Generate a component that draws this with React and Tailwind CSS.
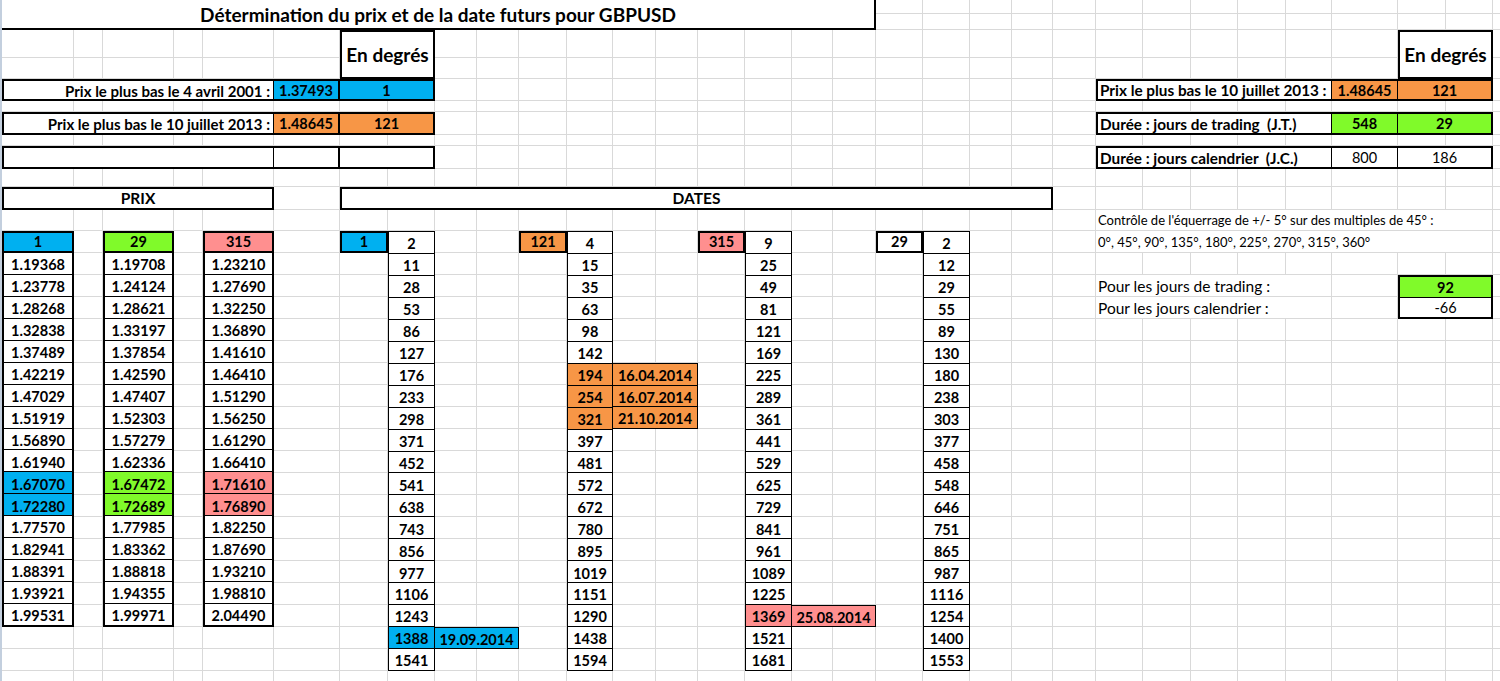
import React from "react";
import clsx from "clsx";

// feuille GBPUSD : colonnes et lignes au pixel près de la capture Excel
const BLUE = "bg-[#00b0f0]";
const ORANGE = "bg-[#f79646]";
const GREEN = "bg-[#80fa2a]";
const PINK = "bg-[#ff8f8f]";

const prixColumns = [
  {
    head: "1",
    pos: "col-start-1",
    body: "col-start-1 row-start-14 row-span-17",
    fill: BLUE,
    values: ["1.19368", "1.23778", "1.28268", "1.32838", "1.37489", "1.42219", "1.47029", "1.51919", "1.56890", "1.61940", "1.67070", "1.72280", "1.77570", "1.82941", "1.88391", "1.93921", "1.99531"],
  },
  {
    head: "29",
    pos: "col-start-3",
    body: "col-start-3 row-start-14 row-span-17",
    fill: GREEN,
    values: ["1.19708", "1.24124", "1.28621", "1.33197", "1.37854", "1.42590", "1.47407", "1.52303", "1.57279", "1.62336", "1.67472", "1.72689", "1.77985", "1.83362", "1.88818", "1.94355", "1.99971"],
  },
  {
    head: "315",
    pos: "col-start-5",
    body: "col-start-5 row-start-14 row-span-17",
    fill: PINK,
    values: ["1.23210", "1.27690", "1.32250", "1.36890", "1.41610", "1.46410", "1.51290", "1.56250", "1.61290", "1.66410", "1.71610", "1.76890", "1.82250", "1.87690", "1.93210", "1.98810", "2.04490"],
  },
];

// colonnes de dates : la 1re valeur est l'en-tête à côté de la case en degrés
const dateColumns = [
  {
    deg: "1",
    degPos: "col-start-7 row-start-13",
    degFill: BLUE,
    body: "col-start-8 row-start-13 row-span-20",
    values: ["2", "11", "28", "53", "86", "127", "176", "233", "298", "371", "452", "541", "638", "743", "856", "977", "1106", "1243", "1388", "1541"],
    marks: { 18: BLUE },
  },
  {
    deg: "121",
    degPos: "col-start-11 row-start-13",
    degFill: ORANGE,
    body: "col-start-12 row-start-13 row-span-20",
    values: ["4", "15", "35", "63", "98", "142", "194", "254", "321", "397", "481", "572", "672", "780", "895", "1019", "1151", "1290", "1438", "1594"],
    marks: { 6: ORANGE, 7: ORANGE, 8: ORANGE },
  },
  {
    deg: "315",
    degPos: "col-start-15 row-start-13",
    degFill: PINK,
    body: "col-start-16 row-start-13 row-span-20",
    values: ["9", "25", "49", "81", "121", "169", "225", "289", "361", "441", "529", "625", "729", "841", "961", "1089", "1225", "1369", "1521", "1681"],
    marks: { 17: PINK },
  },
  {
    deg: "29",
    degPos: "col-start-19 row-start-13",
    degFill: "bg-white",
    body: "col-start-20 row-start-13 row-span-20",
    values: ["2", "12", "29", "55", "89", "130", "180", "238", "303", "377", "458", "548", "646", "751", "865", "987", "1116", "1254", "1400", "1553"],
    marks: {},
  },
];

const leftRows = [
  { pos: "col-start-1 col-span-8 row-start-5", label: "Prix le plus bas le 4 avril 2001 :", value: "1.37493", deg: "1", fill: BLUE },
  { pos: "col-start-1 col-span-8 row-start-7", label: "Prix le plus bas le 10 juillet 2013 :", value: "1.48645", deg: "121", fill: ORANGE },
  { pos: "col-start-1 col-span-8 row-start-9", label: "", value: "", deg: "", fill: "bg-white" },
];

const rightRows = [
  { pos: "col-start-24 col-span-8 row-start-5", label: "Prix le plus bas le 10 juillet 2013 :", value: "1.48645", deg: "121", fill: ORANGE, bold: true },
  { pos: "col-start-24 col-span-8 row-start-7", label: "Durée : jours de trading  (J.T.)", value: "548", deg: "29", fill: GREEN, bold: true },
  { pos: "col-start-24 col-span-8 row-start-9", label: "Durée : jours calendrier  (J.C.)", value: "800", deg: "186", fill: "bg-white", bold: false },
];

const FILLERS = Array.from({ length: 32 * 34 });

function App() {
  return (
    <div className="flex h-[681px] w-[1500px] overflow-hidden bg-white text-[15px] leading-none text-black font-['Lato','Liberation_Sans',sans-serif]">
      <div className="w-[2px] shrink-0 bg-[#c3cfde]" />

      <div className="grid shrink-0 grid-cols-[72px_29px_71px_29px_71px_66px_48px_47px_42px_42px_48px_46px_43px_42px_47px_47px_41px_43px_47px_47px_42px_41px_43px_47px_48px_47px_48px_46px_66px_48px_47px_47px] grid-rows-[14px_16px_28px_21px_22px_11px_23px_11px_23px_18px_23px_21px_repeat(21,22px)] auto-rows-[22px]">
        {/* titre */}
        <div className="col-start-1 col-span-18 row-start-1 row-span-2 flex items-center justify-center border-r-2 border-b-2 border-black bg-white text-[19px] font-bold">
          Détermination du prix et de la date futurs pour GBPUSD
        </div>

        {/* en degrés */}
        <div className="col-start-7 col-span-2 row-start-3 row-span-2 flex items-center justify-center border-2 border-black bg-white text-[19px] font-bold">
          En degrés
        </div>
        <div className="col-start-30 col-span-2 row-start-3 row-span-2 flex items-center justify-center border-2 border-black bg-white text-[19px] font-bold">
          En degrés
        </div>

        {leftRows.map((r) => (
          <div key={r.pos} className={clsx(r.pos, "flex border-2 border-black bg-white font-bold")}>
            <div className="flex w-[270px] items-center justify-end border-r border-black pt-[2px] pr-[3px]">{r.label}</div>
            <div className={clsx("flex w-[66px] items-center justify-center border-r-2 border-black pt-[2px] text-[14.5px]", r.fill)}>{r.value}</div>
            <div className={clsx("flex flex-1 items-center justify-center pt-[2px] text-[14.5px]", r.fill)}>{r.deg}</div>
          </div>
        ))}

        {rightRows.map((r) => (
          <div key={r.pos} className={clsx(r.pos, "flex border-2 border-black bg-white")}>
            <div className="flex w-[234px] items-center border-r border-black pt-[2px] pl-[2px] text-[15.3px] font-bold whitespace-pre">{r.label}</div>
            <div className={clsx("flex w-[66px] items-center justify-center border-r border-black pt-[2px] text-[14.5px]", r.fill, r.bold && "font-bold")}>{r.value}</div>
            <div className={clsx("flex flex-1 items-center justify-center pt-[2px] text-[14.5px]", r.fill, r.bold && "font-bold")}>{r.deg}</div>
          </div>
        ))}

        {/* PRIX / DATES */}
        <div className="col-start-1 col-span-5 row-start-11 flex items-center justify-center border-2 border-black bg-white text-[15.5px] font-bold">PRIX</div>
        <div className="col-start-7 col-span-16 row-start-11 flex items-center justify-center border-2 border-black bg-white text-[15.5px] font-bold">DATES</div>

        {prixColumns.map((c) => (
          <React.Fragment key={c.head}>
            <div className={clsx(c.pos, "row-start-13 flex items-center justify-center border-2 border-black pt-[1px] text-[14.5px] font-bold", c.fill)}>{c.head}</div>
            <div className={clsx(c.body, "flex flex-col border-x-2 border-b-2 border-black bg-white text-[14.5px] font-bold")}>
              {c.values.map((v, i) => (
                <div
                  key={v}
                  className={clsx("flex flex-1 items-center justify-center border-b border-black pt-[4px] last:border-b-0", (i === 10 || i === 11) && c.fill)}
                >
                  {v}
                </div>
              ))}
            </div>
          </React.Fragment>
        ))}

        {dateColumns.map((c) => (
          <React.Fragment key={c.body}>
            <div className={clsx(c.degPos, "flex items-center justify-center border-2 border-black pt-[1px] text-[14.5px] font-bold", c.degFill)}>{c.deg}</div>
            <div className={clsx(c.body, "flex flex-col border border-black bg-white text-[14.5px] font-bold")}>
              {c.values.map((v, i) => (
                <div key={i} className={clsx("flex flex-1 items-center justify-center border-b border-black pt-[4px] last:border-b-0", c.marks[i])}>
                  {v}
                </div>
              ))}
            </div>
          </React.Fragment>
        ))}

        {/* dates calculées */}
        <div className="col-start-13 col-span-2 row-start-19 row-span-3 flex flex-col border-y border-r border-black bg-[#f79646] text-[14.5px] font-bold">
          <div className="flex flex-1 items-center justify-center border-b border-black pt-[4px]">16.04.2014</div>
          <div className="flex flex-1 items-center justify-center border-b border-black pt-[4px]">16.07.2014</div>
          <div className="flex flex-1 items-center justify-center pt-[4px]">21.10.2014</div>
        </div>
        <div className="col-start-17 col-span-2 row-start-30 flex items-center justify-center border-y border-r border-black bg-[#ff8f8f] pt-[4px] text-[14.5px] font-bold">25.08.2014</div>
        <div className="col-start-9 col-span-2 row-start-31 flex items-center justify-center border-y border-r border-black bg-[#00b0f0] pt-[4px] text-[14.5px] font-bold">19.09.2014</div>

        {/* contrôle de l'équerrage */}
        <div className="col-start-24 col-span-8 row-start-12 flex items-center border-r border-b border-[#d9d9d9] bg-white pt-[1px] pl-[2px] text-[13px]">
          Contrôle de l'équerrage de +/- 5° sur des multiples de 45° :
        </div>
        <div className="col-start-24 col-span-8 row-start-13 flex items-center border-r border-b border-[#d9d9d9] bg-white pt-[1px] pl-[2px] text-[13px]">
          0°, 45°, 90°, 135°, 180°, 225°, 270°, 315°, 360°
        </div>
        <div className="col-start-24 col-span-5 row-start-15 flex items-center border-r border-b border-[#d9d9d9] bg-white pt-[3px] pl-[2px] text-[15.5px]">
          Pour les jours de trading :
        </div>
        <div className="col-start-24 col-span-5 row-start-16 flex items-center border-r border-b border-[#d9d9d9] bg-white pt-[3px] pl-[2px] text-[15.5px]">
          Pour les jours calendrier :
        </div>
        <div className="col-start-30 col-span-2 row-start-15 row-span-2 flex flex-col border-2 border-black bg-white text-[14.5px]">
          <div className="flex flex-1 items-center justify-center border-b border-black bg-[#80fa2a] pt-[2px] font-bold">92</div>
          <div className="flex flex-1 items-center justify-center pt-[2px]">-66</div>
        </div>

        {/* cellules vides du quadrillage */}
        {FILLERS.map((_, i) => (
          <div key={i} className="border-r border-b border-[#d9d9d9] bg-white" />
        ))}
      </div>
    </div>
  );
}

export default App;
